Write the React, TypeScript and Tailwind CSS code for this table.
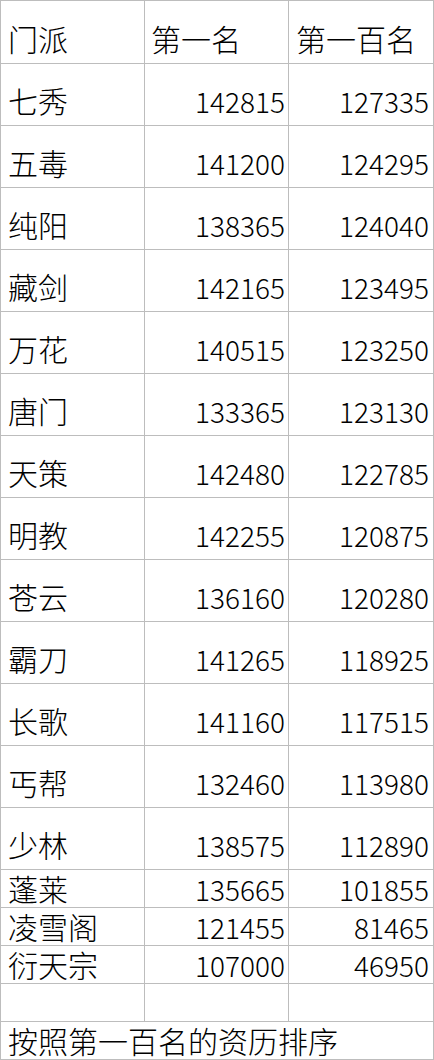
const rows: [string, string, string][] = [
  ["七秀", "142815", "127335"],
  ["五毒", "141200", "124295"],
  ["纯阳", "138365", "124040"],
  ["藏剑", "142165", "123495"],
  ["万花", "140515", "123250"],
  ["唐门", "133365", "123130"],
  ["天策", "142480", "122785"],
  ["明教", "142255", "120875"],
  ["苍云", "136160", "120280"],
  ["霸刀", "141265", "118925"],
  ["长歌", "141160", "117515"],
  ["丐帮", "132460", "113980"],
  ["少林", "138575", "112890"],
]

const shortRows: [string, string, string][] = [
  ["蓬莱", "135665", "101855"],
  ["凌雪阁", "121455", "81465"],
  ["衍天宗", "107000", "46950"],
]

const font = { fontFamily: '"Noto Sans CJK SC", "Noto Sans", sans-serif' }

export default function App() {
  return (
    <div className="w-[434px] h-[1060px] bg-white text-black font-light overflow-hidden" style={font}>
      <div className="grid grid-cols-[144px_144px_145px] border-l border-t border-[#bdbdbd]">
        {/* header */}
        <div className="h-[63px] border-r border-b border-[#bdbdbd] flex items-end pl-[7px] pb-[10px] text-[30px] leading-none">门派</div>
        <div className="h-[63px] border-r border-b border-[#bdbdbd] flex items-end pl-[6px] pb-[10px] text-[30px] leading-none">第一名</div>
        <div className="h-[63px] border-r border-b border-[#bdbdbd] flex items-end pl-[7px] pb-[10px] text-[30px] leading-none">第一百名</div>

        {rows.map((r) => (
          <Row key={r[0]} data={r} tall />
        ))}
        {shortRows.map((r) => (
          <Row key={r[0]} data={r} />
        ))}

        {/* empty row */}
        <div className="h-[38px] border-r border-b border-[#bdbdbd]" />
        <div className="h-[38px] border-r border-b border-[#bdbdbd]" />
        <div className="h-[38px] border-r border-b border-[#bdbdbd]" />

        <div className="col-span-3 h-[38px] border-r border-b border-[#bdbdbd] flex items-end pl-[7px] pb-[4px] text-[30px] leading-none">
          按照第一百名的资历排序
        </div>
      </div>
    </div>
  )
}

function Row({ data, tall }: { data: [string, string, string]; tall?: boolean }) {
  const h = tall ? "h-[62px] pb-[10px]" : "h-[38px] pb-[4px]"
  return (
    <>
      <div className={`${h} border-r border-b border-[#bdbdbd] flex items-end pl-[7px] text-[30px] leading-none`}>
        {data[0]}
      </div>
      <div className={`${h} border-r border-b border-[#bdbdbd] flex items-end justify-end pr-[3px] text-[28px] leading-none`}>
        {data[1]}
      </div>
      <div className={`${h} border-r border-b border-[#bdbdbd] flex items-end justify-end pr-[4px] text-[28px] leading-none`}>
        {data[2]}
      </div>
    </>
  )
}
